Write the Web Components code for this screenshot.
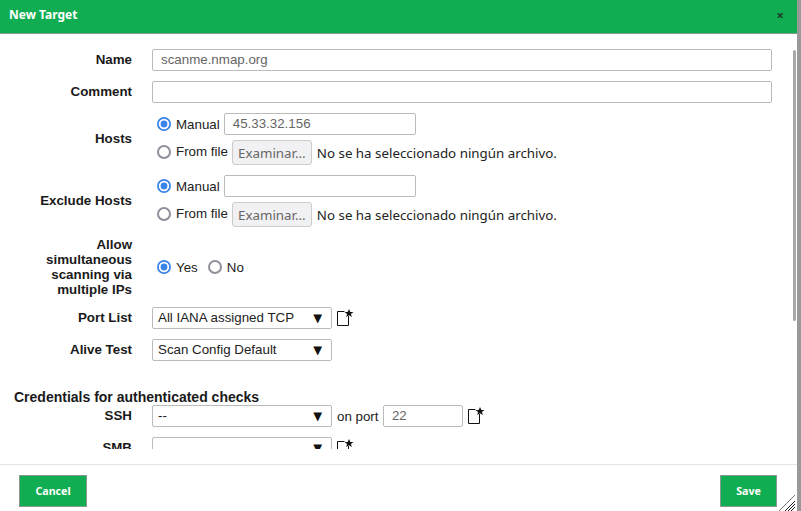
<!DOCTYPE html>
<html>
<head>
<meta charset="utf-8">
<title>New Target</title>
<style>
  html, body { margin: 0; height: 100%; background: #fff; overflow: hidden; }
  body { font: 13.33px "Liberation Sans", Arial, sans-serif; color: #222; }
</style>
</head>
<body>

<gsa-dialog title-text="New Target">
  <form-row label="Name"><text-box width="620" color="gray">scanme.nmap.org</text-box></form-row>
  <form-row label="Comment"><text-box width="620"></text-box></form-row>

  <form-row label="Hosts">
    <host-choice><text-box width="192" color="gray">45.33.32.156</text-box></host-choice>
  </form-row>
  <form-row label="Exclude Hosts">
    <host-choice><text-box width="192"></text-box></host-choice>
  </form-row>

  <form-row label="Allow simultaneous scanning via multiple IPs" tall>
    <div style="display:flex;gap:10px;padding-left:5px">
      <radio-opt checked>Yes</radio-opt>
      <radio-opt>No</radio-opt>
    </div>
  </form-row>

  <form-row label="Port List">
    <div style="display:flex;align-items:center;gap:5px">
      <select-box>All IANA assigned TCP</select-box><new-icon></new-icon>
    </div>
  </form-row>
  <form-row label="Alive Test"><select-box>Scan Config Default</select-box></form-row>

  <section-title>Credentials for authenticated checks</section-title>

  <form-row label="SSH">
    <div style="display:flex;align-items:center;gap:5px">
      <select-box>--</select-box>
      <span style="margin-right:-0.6px">on port</span>
      <text-box width="80" color="gray">22</text-box>
      <new-icon></new-icon>
    </div>
  </form-row>
  <form-row label="SMB">
    <div style="display:flex;align-items:center;gap:5px">
      <select-box></select-box><new-icon></new-icon>
    </div>
  </form-row>

  <gsa-button slot="left" style="width:68px">Cancel</gsa-button>
  <gsa-button slot="right" style="width:57px">Save</gsa-button>
</gsa-dialog>

<script>
// dialogo principal: cabecera, zona de formulario con scroll y pie con botones
class GsaDialog extends HTMLElement {
  constructor() {
    super()
    this.attachShadow({ mode: 'open' })
  }
  connectedCallback() {
    this.shadowRoot.innerHTML = `
      <style>
        :host { display: flex; width: 801px; height: 511px; position: relative; overflow: hidden; }
        .box { width: 797px; display: flex; flex-direction: column; background: #fff; }
        .strip { width: 4px; background: #999; }
        header {
          height: 33px; flex: none; background: #11ad52; border-bottom: 1px solid #8a9a90;
          display: flex; justify-content: space-between; padding: 0 13px 0 9px;
          color: #fff; font: bold 12px "Noto Sans", sans-serif; line-height: 30px;
        }
        .close { color: #1c3a28; font: bold 13px "Noto Sans", sans-serif; line-height: 30px; }
        .scroll { height: 415px; flex: none; overflow: hidden; padding-top: 15px; box-sizing: border-box; }
        footer {
          margin-top: 15px; border-top: 1px solid #e5e5e5; flex: 1;
          display: flex; justify-content: space-between; padding: 10px 20px 0 19px;
        }
        .thumb { position: absolute; left: 793px; top: 50px; width: 3px; height: 271px; background: #a8a8a8; border-radius: 2px; }
        .grip { position: absolute; left: 779px; top: 495px; }
      </style>
      <div class="box">
        <header><span>${this.getAttribute('title-text')}</span><span class="close">×</span></header>
        <div class="scroll"><slot></slot></div>
        <footer><slot name="left"></slot><slot name="right"></slot></footer>
      </div>
      <div class="strip"></div>
      <div class="thumb"></div>
      <svg class="grip" width="17" height="16" viewBox="0 0 17 16" stroke-width="1">
        <path d="M0 16 16 0" stroke="#777"/>
        <path d="M6 16 16 6M9 16 16 9M12 16 16 12" stroke="#222"/>
      </svg>`
  }
}

// fila del formulario: etiqueta a la derecha y controles en el slot
class FormRow extends HTMLElement {
  constructor() {
    super()
    this.attachShadow({ mode: 'open' })
  }
  connectedCallback() {
    this.shadowRoot.innerHTML = `
      <style>
        :host { display: grid; grid-template-columns: 132px 1fr; column-gap: 20px; align-items: center; margin-bottom: 10px; }
        label { font-weight: bold; font-size: 13.33px; line-height: 15px; text-align: right; color: #1a1a1a; padding: 0 0 2px 36px; }
        :host([tall]) label { padding-bottom: 0; }
      </style>
      <label>${this.getAttribute('label')}</label>
      <div><slot></slot></div>`
  }
}

class TextBox extends HTMLElement {
  constructor() {
    super()
    this.attachShadow({ mode: 'open' })
  }
  connectedCallback() {
    const w = this.getAttribute('width')
    const c = this.getAttribute('color') === 'gray' ? '#666' : '#222'
    this.shadowRoot.innerHTML = `
      <style>
        :host { display: block; flex: none; width: ${w}px; height: 22px; box-sizing: border-box;
          border: 1px solid #bbb; border-radius: 2px; background: #fff; padding: 0 8px;
          font-size: 13.33px; line-height: 20px; color: ${c}; }
      </style><slot></slot>`
  }
}

class RadioOpt extends HTMLElement {
  constructor() {
    super()
    this.attachShadow({ mode: 'open' })
  }
  connectedCallback() {
    const on = this.hasAttribute('checked')
    this.shadowRoot.innerHTML = `
      <style>
        :host { display: inline-flex; align-items: center; gap: 5px; font-size: 13.33px; flex: none; color: #222; }
        svg { flex: none; }
      </style>
      <svg width="14" height="14" viewBox="0 0 14 14">
        ${on
          ? '<circle cx="7" cy="7" r="6.1" fill="#fff" stroke="#3b84e8" stroke-width="1.8"/><circle cx="7" cy="7" r="3.4" fill="#3b84e8"/>'
          : '<circle cx="7" cy="7" r="6" fill="#fff" stroke="#8f8f9d" stroke-width="2"/>'}
      </svg><slot></slot>`
  }
}

// grupo Manual / From file con el selector de archivo
class HostChoice extends HTMLElement {
  constructor() {
    super()
    this.attachShadow({ mode: 'open' })
  }
  connectedCallback() {
    this.shadowRoot.innerHTML = `
      <style>
        :host { display: flex; flex-direction: column; gap: 5px; padding-left: 5px; }
        .line { display: flex; align-items: center; gap: 4px; }
        .file { align-items: flex-start; height: 25px; gap: 4px; }
        .file radio-opt { margin-top: 4px; }
        button {
          width: 80px; height: 25px; box-sizing: border-box; padding: 0; margin: 0;
          border: 1px solid #ccc; border-radius: 3px; background: #f1f1f3; color: #666;
          font: 13.33px "Noto Sans", sans-serif;
        }
        .none { font: 13.33px "Noto Sans", sans-serif; color: #222; line-height: 26px; margin-left: 1px; }
      </style>
      <div class="line"><radio-opt checked>Manual</radio-opt><slot></slot></div>
      <div class="line file">
        <radio-opt>From file</radio-opt>
        <button>Examinar...</button>
        <span class="none">No se ha seleccionado ningún archivo.</span>
      </div>`
  }
}

class SelectBox extends HTMLElement {
  constructor() {
    super()
    this.attachShadow({ mode: 'open' })
  }
  connectedCallback() {
    this.shadowRoot.innerHTML = `
      <style>
        :host { display: flex; flex: none; width: 180px; height: 22px; box-sizing: border-box;
          border: 1px solid #bbb; border-radius: 2px; background: #fff; padding: 0 9px 0 5px;
          justify-content: space-between; font-size: 13.33px; line-height: 20px; color: #222; }
        .arrow { color: #111; font-family: "DejaVu Sans", sans-serif; font-size: 11.5px; }
      </style>
      <span><slot></slot></span><span class="arrow">▼</span>`
  }
}

class NewIcon extends HTMLElement {
  constructor() {
    super()
    this.attachShadow({ mode: 'open' })
  }
  connectedCallback() {
    this.shadowRoot.innerHTML = `
      <style>:host { display: block; flex: none; width: 17px; height: 18px; }</style>
      <svg width="17" height="18" viewBox="0 0 17 18">
        <path d="M7.500 2.500H.5V16.500H11.500V7" fill="none" stroke="#111" stroke-width="1"/>
        <path d="M12 0 13.300 3H16.500L13.900 5 14.900 8 12 6.200 9.100 8 10.100 5 7.500 3H10.700Z" fill="#111"/>
      </svg>`
  }
}

class SectionTitle extends HTMLElement {
  constructor() {
    super()
    this.attachShadow({ mode: 'open' })
  }
  connectedCallback() {
    this.shadowRoot.innerHTML = `
      <style>
        :host { display: block; padding: 19px 0 0 14px; font-weight: bold; font-size: 14px; line-height: 15px; color: #1a1a1a; }
      </style><slot></slot>`
  }
}

class GsaButton extends HTMLElement {
  constructor() {
    super()
    this.attachShadow({ mode: 'open' })
  }
  connectedCallback() {
    this.shadowRoot.innerHTML = `
      <style>
        :host { display: flex; height: 32px; box-sizing: border-box; align-items: center; justify-content: center;
          background: #11ad52; border: 1px solid #8a9a90; color: #fff; font: bold 10.67px "Noto Sans", sans-serif; }
      </style><slot></slot>`
  }
}

customElements.define('gsa-dialog', GsaDialog)
customElements.define('form-row', FormRow)
customElements.define('text-box', TextBox)
customElements.define('radio-opt', RadioOpt)
customElements.define('host-choice', HostChoice)
customElements.define('select-box', SelectBox)
customElements.define('new-icon', NewIcon)
customElements.define('section-title', SectionTitle)
customElements.define('gsa-button', GsaButton)
</script>
</body>
</html>
